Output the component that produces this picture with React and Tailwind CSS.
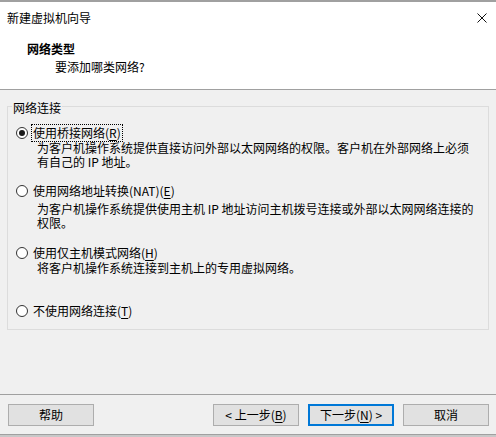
import React from 'react';

const options = [
  {
    label: '使用桥接网络',
    key: 'R',
    focused: true,
    checked: true,
    gap: 'mt-[19px]',
    descGap: 'mt-[1px]',
    desc: ['为客户机操作系统提供直接访问外部以太网网络的权限。客户机在外部网络上必须', '有自己的 IP 地址。'],
  },
  {
    label: '使用网络地址转换(NAT)',
    key: 'E',
    gap: 'mt-[15px]',
    descGap: 'mt-[4px]',
    desc: ['为客户机操作系统提供使用主机 IP 地址访问主机拨号连接或外部以太网网络连接的', '权限。'],
  },
  {
    label: '使用仅主机模式网络',
    key: 'H',
    gap: 'mt-[16px]',
    descGap: 'mt-[1px]',
    desc: ['将客户机操作系统连接到主机上的专用虚拟网络。'],
  },
  {
    label: '不使用网络连接',
    key: 'T',
    gap: 'mt-[29px]',
    desc: [],
  },
];

function Radio({ checked }) {
  return (
    <span className="w-[12px] h-[12px] rounded-full border border-[#333333] bg-white flex items-center justify-center shrink-0">
      {checked && <span className="w-[6px] h-[6px] rounded-full bg-[#1a1a1a]" />}
    </span>
  );
}

function Option({ opt }) {
  return (
    <div className={opt.gap}>
      <div className="flex items-center h-[14px] pl-[8px]">
        <Radio checked={opt.checked} />
        <span
          className={
            'ml-[3px] px-[1px] leading-[14px] py-[1px] border ' +
            (opt.focused ? 'border-dotted border-black' : 'border-transparent')
          }
        >
          {opt.label}(<span className="underline underline-offset-2">{opt.key}</span>)
        </span>
      </div>
      {opt.desc.length > 0 && (
        <div className={'pl-[29px] leading-[14px] ' + opt.descGap}>
          {opt.desc.map((line, i) => (
            <div key={i} className="whitespace-nowrap">{line}</div>
          ))}
        </div>
      )}
    </div>
  );
}

function Button({ children, primary }) {
  return (
    <button
      className={
        'w-[86px] h-[22px] flex items-center justify-center bg-[#e1e1e1] text-[12px] leading-none ' +
        (primary ? 'border-2 border-[#0078d7]' : 'border border-[#adadad]')
      }
    >
      {children}
    </button>
  );
}

export default function App() {
  return (
    <div className="w-[496px] h-[437px] flex flex-col bg-[#f0f0f0] text-black text-[12px] font-['Noto_Sans_CJK_SC','Noto_Sans',sans-serif] overflow-hidden">
      <div className="h-[2px] bg-[#a0a0a0]" />

      <div className="h-[87px] bg-white flex flex-col">
        <div className="h-[32px] flex items-center justify-between pl-[7px] pr-[9px]">
          <span className="leading-[14px]">新建虚拟机向导</span>
          <svg width="10" height="10" viewBox="0 0 10 10" className="shrink-0">
            <path d="M0.5 0.5 L9.5 9.5 M9.5 0.5 L0.5 9.5" stroke="#111" strokeWidth="1" fill="none" />
          </svg>
        </div>
        <div className="mt-[6px] pl-[27px] leading-[18px] font-bold">网络类型</div>
        <div className="pl-[55px] leading-[18px]">要添加哪类网络?</div>
      </div>

      <div className="h-px bg-[#a0a0a0]" />

      <div className="flex-1 px-[7px] pt-[16px]">
        <div className="relative h-[224px] border border-[#dcdcdc]">
          <span className="absolute -top-[6px] left-[4px] px-[1px] bg-[#f0f0f0] leading-[14px]">网络连接</span>
          {options.map((opt, i) => (
            <Option key={i} opt={opt} />
          ))}
        </div>
      </div>

      <div className="h-px bg-[#a0a0a0]" />

      <div className="h-[39px] pt-[9px] pl-[8px] pr-[7px] flex items-start justify-between">
        <Button>帮助</Button>
        <div className="flex gap-[9px]">
          <Button>
            &lt; 上一步(<span className="underline underline-offset-2">B</span>)
          </Button>
          <Button primary>
            下一步(<span className="underline underline-offset-2">N</span>) &gt;
          </Button>
          <Button>取消</Button>
        </div>
      </div>

      <div className="h-px bg-[#a0a0a0]" />
      <div className="h-[2px] bg-[#c8c8c8]" />
    </div>
  );
}
